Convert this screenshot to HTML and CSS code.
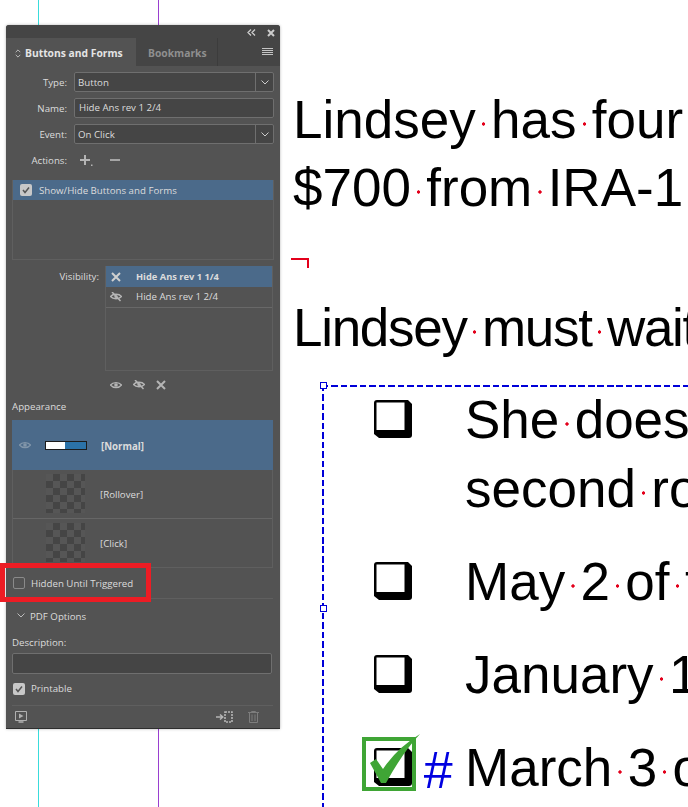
FILE: index.html
```html
<!DOCTYPE html>
<html lang="en">
<head>
<meta charset="utf-8">
<title>Buttons and Forms</title>
<link rel="stylesheet" href="styles.css">
</head>
<body>
<div class="page">
  <i class="guide guide-cyan"></i>
  <i class="guide guide-purple"></i>

  <aside class="panel">
    <div class="titlebar">
      <svg class="ic" width="9" height="7" viewBox="0 0 9 7"><path d="M4 0.5 1 3.5 4 6.5M8 0.5 5 3.5 8 6.5" fill="none" stroke="#ccc" stroke-width="1.3"/></svg>
      <svg class="ic" width="8" height="8" viewBox="0 0 8 8"><path d="M1 1 7 7M7 1 1 7" fill="none" stroke="#ccc" stroke-width="2"/></svg>
    </div>
    <div class="tabs">
      <div class="tab tab-active">
        <svg width="6" height="9" viewBox="0 0 6 9"><path d="M.7 3.2 3 .9 5.3 3.2M.7 5.8 3 8.1 5.3 5.8" fill="none" stroke="#bbb"/></svg>
        <span>Buttons and Forms</span>
      </div>
      <div class="tab tab-other">Bookmarks</div>
      <svg class="menu" width="11" height="8" viewBox="0 0 11 8"><path d="M0 .5H11M0 2.500H11M0 4.500H11M0 6.500H11" stroke="#c4c4c4"/></svg>
    </div>

    <div class="fields">
      <div class="field"><label>Type:</label><div class="input select"><span>Button</span><b class="arrow"><svg width="8" height="5" viewBox="0 0 8 5"><path d="M.5.5 4 4 7.5.5" fill="none" stroke="#ccc"/></svg></b></div></div>
      <div class="field"><label>Name:</label><div class="input name"><span>Hide Ans rev 1 2/4</span></div></div>
      <div class="field"><label>Event:</label><div class="input select"><span>On Click</span><b class="arrow"><svg width="8" height="5" viewBox="0 0 8 5"><path d="M.5.5 4 4 7.5.5" fill="none" stroke="#ccc"/></svg></b></div></div>
      <div class="field actions">
        <label>Actions:</label>
        <svg class="act-plus" width="13" height="11" viewBox="0 0 13 11"><path d="M5 0V10M0 5H10" stroke="#b5b5b5" stroke-width="2"/><path d="M11 9.5h1.5V11H11z" fill="#b5b5b5"/></svg>
        <svg class="act-minus" width="10" height="2" viewBox="0 0 10 2"><path d="M0 1H10" stroke="#a5a5a5" stroke-width="2"/></svg>
      </div>
    </div>

    <div class="action-list">
      <div class="row-selected action-row">
        <span class="check check-on"><svg width="12" height="12" viewBox="0 0 12 12"><path d="M3 6 5 8.5 9 3.5" fill="none" stroke="#555" stroke-width="1.5"/></svg></span>
        <span class="row-text">Show/Hide Buttons and Forms</span>
      </div>
    </div>

    <div class="visibility">
      <label>Visibility:</label>
      <div class="vis-list">
        <div class="vis-row row-selected">
          <svg width="10" height="10" viewBox="0 0 10 10"><path d="M1 1 9 9M9 1 1 9" stroke="#d0d0d0" stroke-width="2"/></svg>
          <strong>Hide Ans rev 1 1/4</strong>
        </div>
        <div class="vis-row vis-line">
          <svg width="12" height="10" viewBox="0 0 12 10"><path d="M.5 4.5C3 1.5 9 1.5 11.5 4.5 9 7.5 3 7.5.5 4.5Z" fill="none" stroke="#b5b5b5" stroke-width="1.3"/><circle cx="6" cy="4.5" r="1.6" fill="#b5b5b5"/><path d="M2 0 10.5 9" stroke="#b5b5b5" stroke-width="1.5"/></svg>
          <span>Hide Ans rev 1 2/4</span>
        </div>
      </div>
    </div>
    <div class="vis-tools">
      <svg width="12" height="8" viewBox="0 0 12 8"><path d="M.5 4C3 .7 9 .7 11.500 4 9 7.300 3 7.300.5 4Z" fill="none" stroke="#b5b5b5" stroke-width="1.300"/><circle cx="6" cy="4" r="1.800" fill="#b5b5b5"/></svg>
      <svg width="12" height="10" viewBox="0 0 12 10"><path d="M.5 4.500C3 1.500 9 1.500 11.500 4.500 9 7.500 3 7.500.5 4.500Z" fill="none" stroke="#b5b5b5" stroke-width="1.300"/><circle cx="6" cy="4.500" r="1.600" fill="#b5b5b5"/><path d="M2 0 10.500 9" stroke="#b5b5b5" stroke-width="1.500"/></svg>
      <svg width="10" height="10" viewBox="0 0 10 10"><path d="M1 1 9 9M9 1 1 9" stroke="#b5b5b5" stroke-width="2"/></svg>
    </div>

    <div class="section-label">Appearance</div>
    <div class="states">
      <div class="state state-normal row-selected">
        <svg class="state-eye" width="12" height="8" viewBox="0 0 12 8"><path d="M.5 4C3 .7 9 .7 11.500 4 9 7.300 3 7.300.5 4Z" fill="none" stroke="#8296aa" stroke-width="1.300"/><circle cx="6" cy="4" r="1.800" fill="#8296aa"/></svg>
        <span class="thumb-btn"><i class="thumb-white"></i><i class="thumb-blue"></i></span>
        <strong class="state-text">[Normal]</strong>
      </div>
      <div class="state state-line"><span class="thumb"></span><span class="state-text">[Rollover]</span></div>
      <div class="state state-line state-last"><span class="thumb"></span><span class="state-text">[Click]</span></div>
    </div>

    <div class="check-row hidden-row"><span class="check"></span><span class="row-text">Hidden Until Triggered</span></div>
    <div class="pdf-head">
      <svg width="8" height="5" viewBox="0 0 8 5"><path d="M.5.5 4 4 7.500.5" fill="none" stroke="#bbb"/></svg>
      <span>PDF Options</span>
    </div>
    <div class="desc-label">Description:</div>
    <div class="desc-input"></div>
    <div class="check-row print-row">
      <span class="check check-on"><svg width="12" height="12" viewBox="0 0 12 12"><path d="M3 6 5 8.500 9 3.500" fill="none" stroke="#555" stroke-width="1.500"/></svg></span>
      <span>Printable</span>
    </div>
    <div class="footer">
      <svg width="12" height="12" viewBox="0 0 12 12"><path d="M.5.5H11.500V9.500H.5Z" fill="none" stroke="#b0b0b0"/><path d="M4 2.500 8.500 5 4 7.500Z" fill="#b0b0b0"/><path d="M3.500 11H8.500" stroke="#b0b0b0" stroke-width="1.500"/></svg>
      <span class="footer-gap"></span>
      <svg width="17" height="12" viewBox="0 0 17 12"><path d="M0 6H6M4 3.500 6.800 6 4 8.500" fill="none" stroke="#b5b5b5" stroke-width="1.500"/><path d="M9 1H16V11H9Z" fill="none" stroke="#b5b5b5" stroke-width="1.600" stroke-dasharray="2 1"/></svg>
      <svg class="trash" width="11" height="12" viewBox="0 0 11 12"><path d="M0 1.500H11M3.500 1.500V.5H7.500V1.500M1.500 1.500V11.500H9.500V1.500M4 3.500V10M7 3.500V10" fill="none" stroke="#7d7d7d"/></svg>
    </div>
    <div class="callout"></div>
  </aside>

  <main class="doc">
    <p class="line">Lindsey<i class="sp"></i>has<i class="sp"></i>four</p>
    <p class="line">$700<i class="sp"></i>from<i class="sp"></i>IRA-1</p>
    <div class="para-mark"></div>
    <p class="line line-tight">Lindsey<i class="sp"></i>must<i class="sp"></i>wait</p>
    <section class="frame">
      <i class="handle handle-top"></i>
      <i class="handle handle-mid"></i>
      <div class="item">
        <div class="mark"><svg class="box" width="38" height="38" viewBox="0 0 38 38"><path d="M0 3Q0 0 3 0H34L38 4V35Q38 38 35 38H5L0 34Z" fill="#000"/><rect x="2.500" y="2.500" width="28" height="27.500" fill="#fff"/></svg></div>
        <div class="answer"><p>She<i class="sp"></i>does</p><p>second<i class="sp"></i>ro</p></div>
      </div>
      <div class="item">
        <div class="mark"><svg class="box" width="38" height="38" viewBox="0 0 38 38"><path d="M0 3Q0 0 3 0H34L38 4V35Q38 38 35 38H5L0 34Z" fill="#000"/><rect x="2.500" y="2.500" width="28" height="27.500" fill="#fff"/></svg></div>
        <div class="answer"><p>May<i class="sp"></i>2<i class="sp"></i>of<i class="sp"></i>the</p></div>
      </div>
      <div class="item">
        <div class="mark"><svg class="box" width="38" height="38" viewBox="0 0 38 38"><path d="M0 3Q0 0 3 0H34L38 4V35Q38 38 35 38H5L0 34Z" fill="#000"/><rect x="2.500" y="2.500" width="28" height="27.500" fill="#fff"/></svg></div>
        <div class="answer"><p>January<i class="sp"></i>1</p></div>
      </div>
      <div class="item">
        <div class="mark">
          <svg class="box" width="38" height="38" viewBox="0 0 38 38"><path d="M0 3Q0 0 3 0H34L38 4V35Q38 38 35 38H5L0 34Z" fill="#000"/><rect x="2.500" y="2.500" width="28" height="27.500" fill="#fff"/></svg>
          <svg class="tick" width="60" height="58" viewBox="0 0 60 58"><rect x="2" y="5" width="50" height="50" fill="none" stroke="#3fa535" stroke-width="4"/><path d="M8 29 14 25 21 35Q35 14 58 0 41 18 24 49H19Z" fill="#3fa535"/></svg>
          <span class="hash">#</span>
        </div>
        <div class="answer"><p>March<i class="sp"></i>3<i class="sp"></i>of</p></div>
      </div>
    </section>
  </main>
</div>
</body>
</html>
```
FILE: styles.css
```css
* { box-sizing: border-box; }
html, body { margin: 0; background: #fff; }
p { margin: 0; }

.page {
  position: relative;
  display: flex;
  align-items: flex-start;
  width: 688px;
  height: 807px;
  overflow: hidden;
  background: #fff;
}

.guide { position: absolute; top: 0; bottom: 0; width: 1px; }
.guide-cyan { left: 38px; background: #39dcdc; }
.guide-purple { left: 158px; background: #9a3fd0; }

/* panel */
.panel {
  position: relative;
  flex: none;
  width: 274px;
  height: 704px;
  margin: 25px 0 0 6px;
  display: flex;
  flex-direction: column;
  background: #535353;
  color: #dcdcdc;
  font: 9.700px/14px "Open Sans", "Liberation Sans", sans-serif;
  border-radius: 3px 3px 0 0;
  box-shadow: 0 0 3px rgba(0, 0, 0, .3);
  border-bottom: 1px solid #2e2e2e;
}
.titlebar {
  height: 13px;
  flex: none;
  background: #454545;
  border-radius: 3px 3px 0 0;
  display: flex;
  justify-content: flex-end;
  align-items: center;
  gap: 11px;
  padding: 2px 5px 0 0;
}
.tabs {
  height: 28px;
  flex: none;
  display: flex;
  align-items: center;
  background: #454545;
}
.tab { height: 100%; display: flex; align-items: center; font-weight: 700; font-size: 10.300px; padding-top: 2px; }
.tab-active { width: 130px; background: #535353; padding-left: 9px; gap: 4px; color: #e4e4e4; }
.tab-other { width: 82px; padding-left: 12px; color: #8f8f8f; border-right: 1px solid #3c3c3c; }
.menu { margin-left: auto; margin-right: 7px; }

.fields { padding-top: 6px; display: flex; flex-direction: column; gap: 6px; }
.field { display: flex; align-items: center; height: 20px; }
.field label { width: 61px; text-align: right; margin-right: 7px; flex: none; padding-top: 2px; }
.input {
  width: 200px;
  height: 20px;
  display: flex;
  align-items: center;
  background: #454545;
  border: 1px solid #6f6f6f;
  border-radius: 2px;
}
.input span { padding: 2px 0 0 3px; flex: 1; }
.input.name span { padding: 0 0 0 4px; }
.arrow {
  width: 18px;
  height: 100%;
  border-left: 1px solid #6f6f6f;
  display: flex;
  align-items: center;
  justify-content: center;
}
.act-plus { margin-left: 6px; }
.act-minus { margin-left: 17px; }

.action-list {
  margin: 10px 6px 0;
  height: 80px;
  width: 262px;
  border: 1px solid #5f5f5f;
  border-top: 0;
  flex: none;
}
.row-selected { background: #4b6a8a; }
.action-row { height: 20px; display: flex; align-items: center; gap: 7px; padding-left: 7px; }
.row-text { padding-top: 2px; }

.check {
  width: 12px;
  height: 12px;
  flex: none;
  border: 1px solid #8a8a8a;
  border-radius: 2px;
  display: block;
}
.check-on { background: #c8c8c8; border: 0; }
.check-on svg { display: block; }

.visibility { display: flex; margin-top: 6px; }
.visibility label { width: 93px; text-align: right; padding-top: 4px; margin-right: 6px; flex: none; }
.vis-list { width: 168px; height: 105px; border: 1px solid #5f5f5f; border-top: 0; }
.vis-row { height: 21px; display: flex; align-items: center; padding-left: 4px; }
.vis-row svg { width: 12px; flex: none; margin-right: 14px; }
.vis-row strong { font-size: 9.300px; }
.vis-line { border-bottom: 1px solid #686868; }
.vis-tools {
  height: 14px;
  margin-top: 7px;
  padding-left: 104px;
  display: flex;
  align-items: center;
  gap: 11px;
  flex: none;
}

.section-label { margin: 8px 0 0 6px; height: 14px; flex: none; }
.states { margin: 6px 0 0 6px; width: 261px; height: 148px; flex: none; border: 1px solid #5f5f5f; border-top: 0; }
.state { display: flex; align-items: center; padding-left: 33px; position: relative; }
.state-normal { height: 50px; margin: 0 -1px; }
.state-line { height: 48.500px; gap: 15px; padding-left: 33px; border-bottom: 1px solid #666; }
.state-last { border-bottom: 0; height: 48.500px; }
.state-text { padding-top: 3px; }
.state-eye { position: absolute; left: 7px; top: 21px; }
.thumb-btn { width: 42px; height: 9px; display: flex; border: 1px solid #1c1c1c; margin-right: 14px; }
.thumb-white { width: 19px; background: #fff; }
.thumb-blue { flex: 1; background: #2b72a8; }
.thumb {
  width: 39px;
  height: 39px;
  background: repeating-conic-gradient(#454545 0 25%, #565656 0 50%) 0 0 / 14px 14px;
}

.check-row { display: flex; align-items: center; gap: 6px; padding-left: 7px; flex: none; }
.hidden-row { height: 31px; border-bottom: 1px solid #5f5f5f; margin-right: 7px; }
.pdf-head { display: flex; align-items: center; gap: 5px; height: 14px; padding-left: 11px; margin-top: 11px; flex: none; }
.pdf-head svg { margin-bottom: 4px; }
.desc-label { margin: 12px 0 0 6px; height: 14px; flex: none; }
.desc-input {
  margin: 3px 0 0 6px;
  width: 260px;
  height: 21px;
  flex: none;
  background: #454545;
  border: 1px solid #6f6f6f;
  border-radius: 2px;
}
.print-row { margin-top: 9px; height: 12px; }
.footer {
  margin: 10px 7px 0 6px;
  flex: 1;
  border-top: 1px solid #5f5f5f;
  display: flex;
  align-items: center;
  padding: 0 14px 0 3px;
}
.footer-gap { flex: 1; }
.trash { margin-left: 15px; }

.callout {
  position: absolute;
  left: -6px;
  top: 538px;
  width: 151px;
  height: 39px;
  border: 5px solid #ed1c24;
}

/* document */
.doc {
  flex: none;
  margin: 86px 0 0 13px;
  width: 700px;
  color: #000;
  font: 53px/68px "Liberation Sans", Arial, sans-serif;
  white-space: nowrap;
}
.line-tight { letter-spacing: -1.300px; }
.sp {
  display: inline-block;
  width: .29em;
  height: 4px;
  vertical-align: .22em;
  background: radial-gradient(circle at center, #e3001b 0 1.400px, transparent 1.900px);
}
.para-mark {
  width: 18px;
  height: 10px;
  margin: 36px 0 26px -2px;
  border-top: 2px solid #e3001b;
  border-right: 2px solid #e3001b;
}
.frame {
  position: relative;
  margin: 25px 0 0 29px;
  min-height: 446px;
  background:
    repeating-linear-gradient(to right, #0000d8 0 6.500px, transparent 6.500px 9.500px) 0 0 / 100% 2px no-repeat,
    repeating-linear-gradient(to bottom, #0000d8 0 6.500px, transparent 6.500px 9.500px) 0 0 / 2px 100% no-repeat;
  line-height: 69px;
}
.handle {
  position: absolute;
  left: -2px;
  width: 7px;
  height: 7px;
  background: #fff;
  border: 1px solid #0000d8;
}
.handle-top { top: -3px; }
.handle-mid { top: 220px; }
.item { display: flex; align-items: baseline; margin-bottom: 24px; padding-left: 52px; }
.item:first-of-type { margin-top: -2px; }
.mark { position: relative; width: 91px; flex: none; display: flex; align-items: baseline; }
.box { display: block; }
.answer { flex: none; }
.tick { position: absolute; left: -12px; bottom: -6px; }
.hash {
  position: absolute;
  left: 49px;
  bottom: -19px;
  color: #0000e0;
  font-style: italic;
  font-size: 52px;
  line-height: 69px;
}
```
